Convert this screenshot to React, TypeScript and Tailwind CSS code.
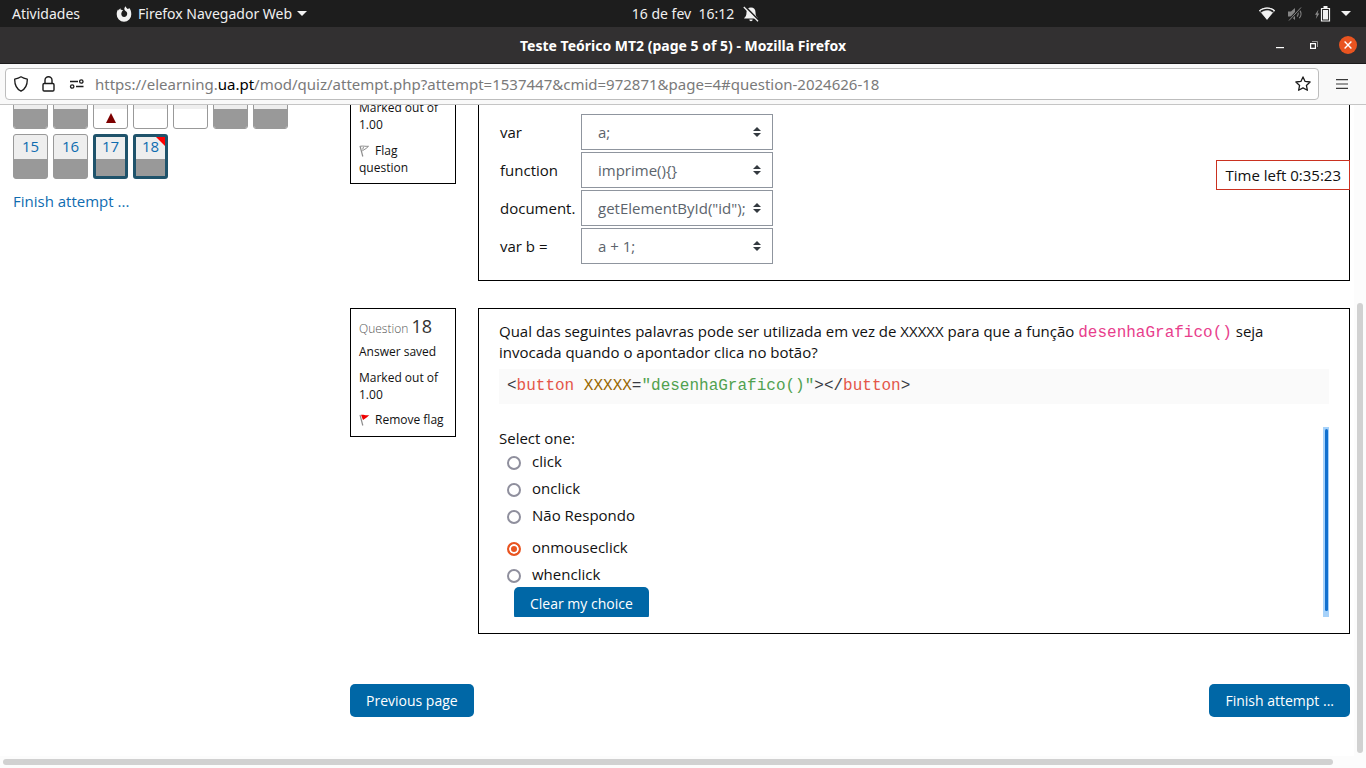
import React, { useState } from "react";

type NavKind = "answered" | "incorrect" | "empty";

const previousRow: { n: number; kind: NavKind }[] = [
  { n: 8, kind: "answered" },
  { n: 9, kind: "answered" },
  { n: 10, kind: "incorrect" },
  { n: 11, kind: "empty" },
  { n: 12, kind: "empty" },
  { n: 13, kind: "answered" },
  { n: 14, kind: "answered" },
];

const currentRow = [
  { n: 15, current: false, flagged: false },
  { n: 16, current: false, flagged: false },
  { n: 17, current: true, flagged: false },
  { n: 18, current: true, flagged: true },
];

const matches = [
  { id: "m1", label: "var", value: "a;" },
  { id: "m2", label: "function", value: "imprime(){}" },
  { id: "m3", label: "document.", value: 'getElementById("id");' },
  { id: "m4", label: "var b =", value: "a + 1;" },
];

const choices = ["click", "onclick", "Não Respondo", "onmouseclick", "whenclick"];

function SystemBar() {
  return (
    <header className="grid h-[27px] shrink-0 grid-cols-[1fr_auto_1fr] items-center bg-[#1d1d1d] font-['Noto_Sans',sans-serif] text-[14px] leading-[27px] text-[#f0f0f0]">
      <div className="flex items-center">
        <button className="pl-3">Atividades</button>
        <button className="ml-[36px] flex items-center">
          <svg width="16" height="16" viewBox="0 0 16 16" fill="none" aria-hidden="true">
            <path
              d="M9.6.2c.3 1.1 1 1.8 2 2.7l2-.6c1 1.500 1.700 3.500 1.700 5.900A7.300 7.300 0 0 1 8 15.700 7.300 7.300 0 0 1 .7 8.200c0-1.800.6-3.500 1.500-4.900l.3 1.200C3 3.600 3.700 2.800 4.500 2.200l.2 1.600c.9-.1 1.700.1 2.400.5L6 5.500l-.7 1.700c-.2 2.300 1 3.700 2.800 3.700 1.900 0 3.100-1.400 3.100-3.200 0-1.300-.7-2.200-1.700-2.700C7.800 3.800 8 1.900 9.600.2Z"
              fill="#f2f2f2"
            />
          </svg>
          <span className="ml-[6px]">Firefox Navegador Web</span>
          <svg className="ml-[5px]" width="10" height="5" viewBox="0 0 10 5" aria-hidden="true">
            <path d="M0 0h10L5 5Z" fill="#f2f2f2" />
          </svg>
        </button>
      </div>
      <button className="flex items-center gap-[9px] pl-[25px]">
        <span className="whitespace-pre">16 de fev  16:12</span>
        <svg width="16" height="16" viewBox="0 0 16 16" aria-hidden="true">
          <path d="M8 1.500c2.800 0 4.500 1.900 4.500 4.700 0 3 .7 4.400 2.300 5.800v.5H1.200V12c1.600-1.400 2.300-2.800 2.300-5.800C3.500 3.400 5.200 1.500 8 1.500ZM6.300 13.500h3.400a1.700 1.700 0 0 1-3.400 0Z" fill="#f2f2f2" />
          <path d="M1.700.3 15.800 14.400" stroke="#1d1d1d" strokeWidth="2" />
          <path d="M.8 1 15 15.200" stroke="#f2f2f2" strokeWidth="1.300" />
        </svg>
      </button>
      <div className="flex items-center justify-end pr-[15px]">
        <svg width="16" height="13" viewBox="0 0 16 13" aria-hidden="true">
          <path d="M0 3.600C4.500-.6 11.500-.6 16 3.600L8 12.800Z" fill="#bdbdbd" />
          <path d="M1 3.800C5 .2 11 .2 15 3.800l-1.200 1.400c-3.300-2.700-8.300-2.700-11.600 0Z" fill="#1d1d1d" />
          <path d="M0 3.600C4.500-.6 11.500-.6 16 3.600l-.6.8C11 .7 5 .7.600 4.400Z" fill="#f2f2f2" />
          <path d="M2.600 5.800c3-2.600 7.800-2.600 10.800 0L8 12.800Z" fill="#f2f2f2" />
        </svg>
        <svg className="ml-[13px]" width="16" height="14" viewBox="0 0 16 14" fill="none" aria-hidden="true">
          <path d="M0 4.500h3L7 1v12L3 9.500H0Z" fill="#858585" />
          <path d="M9 4.500c1.300 1.400 1.300 3.600 0 5M11.300 2.800c2.200 2.400 2.200 6 0 8.400" stroke="#858585" strokeWidth="1.200" />
          <path d="M1 13.500 13 .5" stroke="#1d1d1d" strokeWidth="2.600" />
          <path d="M1 13.500 13 .5" stroke="#858585" strokeWidth="1" />
        </svg>
        <svg className="ml-[11px]" width="16" height="16" viewBox="0 0 16 16" aria-hidden="true">
          <path d="M3.500 3.500 0 8.700h1.800L.8 13 4.300 7.500H2.500Z" fill="#8c8c8c" />
          <path d="M6.500 2.500h8v12.500h-8Z" fill="none" stroke="#f2f2f2" strokeWidth="1.200" />
          <path d="M8 4h5v9.500H8ZM8.500 0h4v2h-4Z" fill="#f2f2f2" />
        </svg>
        <svg className="ml-[10px]" width="10" height="5" viewBox="0 0 10 5" aria-hidden="true">
          <path d="M0 0h10L5 5Z" fill="#f2f2f2" />
        </svg>
      </div>
    </header>
  );
}

function TitleBar() {
  return (
    <div className="grid h-[37px] shrink-0 grid-cols-[1fr_auto_1fr] items-center border-b border-[#1b1a1b] bg-[#323031] text-white">
      <span />
      <h1 className="font-['Noto_Sans',sans-serif] text-[14px] font-bold">Teste Teórico MT2 (page 5 of 5) - Mozilla Firefox</h1>
      <div className="flex items-center justify-end pr-[9px]">
        <button aria-label="Minimize">
          <svg width="8" height="10" viewBox="0 0 8 10">
            <path d="M0 7h8v1.200H0Z" fill="#fff" />
          </svg>
        </button>
        <button aria-label="Restore" className="ml-[26px]">
          <svg width="8" height="8" viewBox="0 0 8 8" fill="none">
            <path d="M.6 2.600h4.800v4.800H.6Z" stroke="#fff" strokeWidth="1.200" />
            <path d="M2 .5h5.500V6" stroke="#9a9999" />
          </svg>
        </button>
        <button aria-label="Close" className="ml-[21px]">
          <svg width="18" height="18" viewBox="0 0 18 18">
            <circle cx="9" cy="9" r="9" fill="#e95420" />
            <path d="m5.600 5.600 6.800 6.800m0-6.800-6.800 6.800" stroke="#fff" strokeWidth="1.400" />
          </svg>
        </button>
      </div>
    </div>
  );
}

function AddressBar() {
  return (
    <div className="flex h-[41px] shrink-0 items-center border-b border-[#c5c5c5] bg-[#f9f9f9] pl-[5px] pr-[18px]">
      <div className="flex h-[32px] min-w-0 flex-1 items-center rounded-[4px] border border-[#bdbdbd] bg-white pl-[8px] pr-[7px]">
        <svg width="14" height="16" viewBox="0 0 14 16" fill="none" stroke="#1b1b1b" strokeWidth="1.300" aria-hidden="true">
          <path d="M7 .8c1.300.9 3.700 1.900 6.300 2.400C13.400 8.600 12 12.700 7 15.200 2 12.700.6 8.600.7 3.200 3.300 2.700 5.700 1.700 7 .8Z" strokeLinejoin="round" />
        </svg>
        <svg className="ml-[14px]" width="13" height="16" viewBox="0 0 13 16" fill="none" stroke="#1b1b1b" strokeWidth="1.400" aria-hidden="true">
          <rect x="1" y="7.500" width="11" height="7.500" rx="1.200" />
          <path d="M3 7.500V4.300a3.500 3.500 0 0 1 7 0v3.200" />
        </svg>
        <svg className="ml-[14px]" width="16" height="10" viewBox="0 0 16 10" fill="none" stroke="#1b1b1b" strokeWidth="1.300" aria-hidden="true">
          <path d="M1 2.500h8M7 7.500h7.500" />
          <circle cx="12.300" cy="2.500" r="1.700" />
          <circle cx="3.200" cy="7.500" r="1.700" />
        </svg>
        <p className="ml-[10px] min-w-0 flex-1 truncate font-['Noto_Sans',sans-serif] text-[15px] text-[#7a7a7a]">
          https://elearning.<span className="text-black">ua.pt</span>/mod/quiz/attempt.php?attempt=1537447&amp;cmid=972871&amp;page=4#question-2024626-18
        </p>
        <button aria-label="Bookmark this page">
          <svg width="16" height="16" viewBox="0 0 16 16" fill="none" stroke="#1b1b1b" strokeWidth="1.300" strokeLinejoin="round">
            <path d="m8 .9 2.100 4.500 5 .6-3.700 3.400 1 4.900L8 11.900l-4.400 2.400 1-4.900L.9 6l5-.6Z" />
          </svg>
        </button>
      </div>
      <button aria-label="Open application menu" className="ml-[17px]">
        <svg width="12" height="10" viewBox="0 0 12 10">
          <path d="M0 0h12v1.200H0ZM0 4.400h12v1.200H0ZM0 8.800h12V10H0Z" fill="#3a3a3a" />
        </svg>
      </button>
    </div>
  );
}

function QuizNavigation() {
  return (
    <nav aria-label="Quiz navigation" className="w-[337px] shrink-0">
      <div className="flex gap-[5px]">
        {previousRow.map(({ n, kind }) => (
          <button
            key={n}
            aria-label={`Question ${n}`}
            className="flex h-[45px] w-[35px] flex-col overflow-hidden rounded-[3px] border border-[#999999] bg-white"
          >
            <span className="h-[24px] w-full bg-[#eeeeee]" />
            <span className={kind === "answered" ? "flex w-full flex-1 bg-[#999999]" : "flex w-full flex-1 justify-center pt-[4px]"}>
              {kind === "incorrect" && (
                <svg width="10" height="10" viewBox="0 0 10 10">
                  <path d="M5 0l5 10H0Z" fill="#7d0000" />
                </svg>
              )}
            </span>
          </button>
        ))}
      </div>
      <div className="mt-[5px] flex gap-[5px]">
        {currentRow.map(({ n, current, flagged }) => (
          <button
            key={n}
            className={
              current
                ? "relative flex h-[45px] w-[35px] flex-col overflow-hidden rounded-[3px] border-3 border-[#1f536b] bg-[#999999] text-[15px] text-[#0f6cb0]"
                : "relative flex h-[45px] w-[35px] flex-col overflow-hidden rounded-[3px] border border-[#999999] bg-[#999999] text-[15px] text-[#0f6cb0]"
            }
          >
            <span className={current ? "h-[22px] w-full bg-[#eeeeee] leading-[18px]" : "h-[24px] w-full bg-[#eeeeee] leading-[22px]"}>{n}</span>
            {flagged && (
              <svg className="absolute right-0 top-0" width="9" height="9" viewBox="0 0 9 9">
                <path d="M0 0h9v9Z" fill="#ff0000" />
              </svg>
            )}
          </button>
        ))}
      </div>
      <a href="#finish" className="mt-[12px] block text-[15px] leading-[20px] text-[#0f6cb0]">
        Finish attempt ...
      </a>
    </nav>
  );
}

function FlagIcon({ active }: { active: boolean }) {
  return (
    <svg className="mb-[2px] mr-[5px] inline-block" width="11" height="12" viewBox="0 0 11 12" fill="none" aria-hidden="true">
      <path d="M1 .8 3.800 11.500" stroke="#8c8c8c" strokeWidth="1.200" />
      {active ? (
        <path d="M2 .8c2.500-.4 4.500.8 8.300.2L8 3.200 4 6Z" fill="#ee0000" />
      ) : (
        <path d="M1.500 1.200c2.500-.4 4.500.3 8 .1L7 3.500 3.300 5.800M4.500 2 3.600 4.500" stroke="#8c8c8c" />
      )}
    </svg>
  );
}

const primaryButton = "h-[33px] rounded-[5px] bg-[#0067a6] px-4 text-[14px] leading-[33px] text-white";

function QuestionSeventeen() {
  return (
    <section className="flex items-start gap-[22px]">
      <div className="w-[106px] shrink-0 border border-t-0 border-black px-2 pb-[7px] pt-[15px] text-[12px] leading-[17px] text-[#111]">
        <p>Marked out of 1.00</p>
        <button className="mt-[9px] text-left">
          <FlagIcon active={false} />
          Flag question
        </button>
      </div>
      <div className="min-w-0 flex-1 border border-t-0 border-black pb-[16px] pl-[21px] pt-[30px]">
        <div className="grid gap-[2px]">
          {matches.map((m) => (
            <div key={m.id} className="flex items-center">
              <label htmlFor={m.id} className="w-[81px] text-[15px] text-[#111]">
                {m.label}
              </label>
              <span className="relative">
                <select
                  id={m.id}
                  className="block h-[36px] w-[192px] appearance-none border border-[#8f959e] bg-white pl-4 pr-[26px] text-[15px] text-[#5c646c]"
                >
                  <option>{m.value}</option>
                </select>
                <svg className="pointer-events-none absolute right-[12px] top-[13px]" width="8" height="10" viewBox="0 0 8 10" aria-hidden="true">
                  <path d="M4 0l4 4H0ZM0 6h8L4 10Z" fill="#343a40" />
                </svg>
              </span>
            </div>
          ))}
        </div>
      </div>
    </section>
  );
}

function QuestionEighteen() {
  const [choice, setChoice] = useState("onmouseclick");
  return (
    <section className="mt-[27px] flex items-start gap-[22px]">
      <div className="w-[106px] shrink-0 border border-black px-2 pb-[8px] pt-[7px] text-[12px] leading-[17px] text-[#111]">
        <h2 className="leading-[20px] text-[#555]">
          <span className="font-light">Question</span> <span className="text-[18px] text-[#333]">18</span>
        </h2>
        <p className="mt-[4px]">Answer saved</p>
        <p className="mt-[9px]">Marked out of 1.00</p>
        <button className="mt-[8px] whitespace-nowrap text-left">
          <FlagIcon active />
          Remove flag
        </button>
      </div>
      <div className="min-w-0 flex-1 border border-black px-[20px] pb-[16px] pt-[12px] text-[15px] text-[#111]">
        <p className="leading-[21px]">
          Qual das seguintes palavras pode ser utilizada em vez de XXXXX para que a função{" "}
          <code className="font-['Liberation_Mono',monospace] text-[16px] leading-none text-[#e83e8c]">desenhaGrafico()</code> seja invocada
          quando o apontador clica no botão?
        </p>
        <pre className="mt-[6px] bg-[#fafafa] px-2 font-['Liberation_Mono',monospace] text-[16px] leading-[35px] text-[#383a42]">
          &lt;<span className="text-[#e45649]">button</span> <span className="text-[#986801]">XXXXX</span>=
          <span className="text-[#50a14f]">"desenhaGrafico()"</span>&gt;&lt;/<span className="text-[#e45649]">button</span>&gt;
        </pre>
        <div className="mt-[23px] flex h-[190px] overflow-hidden">
          <fieldset className="min-w-0 flex-1">
            <legend className="h-[22px] leading-[22px]">Select one:</legend>
            {choices.map((c) => (
              <label key={c} className={c === "onmouseclick" ? "mt-[5px] flex h-[27px] items-center pl-2" : "flex h-[27px] items-center pl-2"}>
                <input
                  type="radio"
                  name="answer"
                  checked={choice === c}
                  onChange={() => setChoice(c)}
                  className="size-[14px] appearance-none rounded-full border-2 border-[#8f8f9d] bg-white checked:border-[#e95420] checked:bg-[#e95420] checked:shadow-[inset_0_0_0_2px_#fff]"
                />
                <span className="ml-[11px] pb-[2px]">{c}</span>
              </label>
            ))}
            <button onClick={() => setChoice("")} className={`${primaryButton} -mt-[2px] ml-[15px]`}>
              Clear my choice
            </button>
          </fieldset>
          <div className="h-full w-[6px] bg-[#a6d2fa] pl-[2px] pt-[2px]">
            <div className="h-[182px] w-[3px] rounded-full bg-[#1170cf]" />
          </div>
        </div>
      </div>
    </section>
  );
}

export default function App() {
  return (
    <div className="flex h-screen flex-col overflow-hidden bg-white font-['Open_Sans','Noto_Sans',sans-serif]">
      <SystemBar />
      <TitleBar />
      <AddressBar />
      <div className="relative flex min-h-0 flex-1 overflow-hidden">
        <main className="-mt-[21px] flex min-w-0 flex-1 pl-[13px] pr-[4px]">
          <QuizNavigation />
          <div className="min-w-0 flex-1">
            <QuestionSeventeen />
            <QuestionEighteen />
            <div className="mt-[50px] flex justify-between">
              <button className={primaryButton}>Previous page</button>
              <button className={primaryButton}>Finish attempt ...</button>
            </div>
          </div>
        </main>
        <div className="w-[12px] shrink-0 bg-[#fcfcfc] pl-[3px] pt-[198px]">
          <div className="h-[450px] w-[6px] rounded-full bg-[#d1d1d1]" />
        </div>
        <div className="absolute right-[16px] top-[55px] border border-[#ca3120] bg-white px-2 text-[15px] leading-[28px] text-[#111]">
          Time left 0:35:23
        </div>
      </div>
      <div className="h-[12px] shrink-0 bg-[#fcfcfc] pl-[3px] pr-[33px] pt-[3px]">
        <div className="h-[6px] rounded-full bg-[#d1d1d1]" />
      </div>
    </div>
  );
}
